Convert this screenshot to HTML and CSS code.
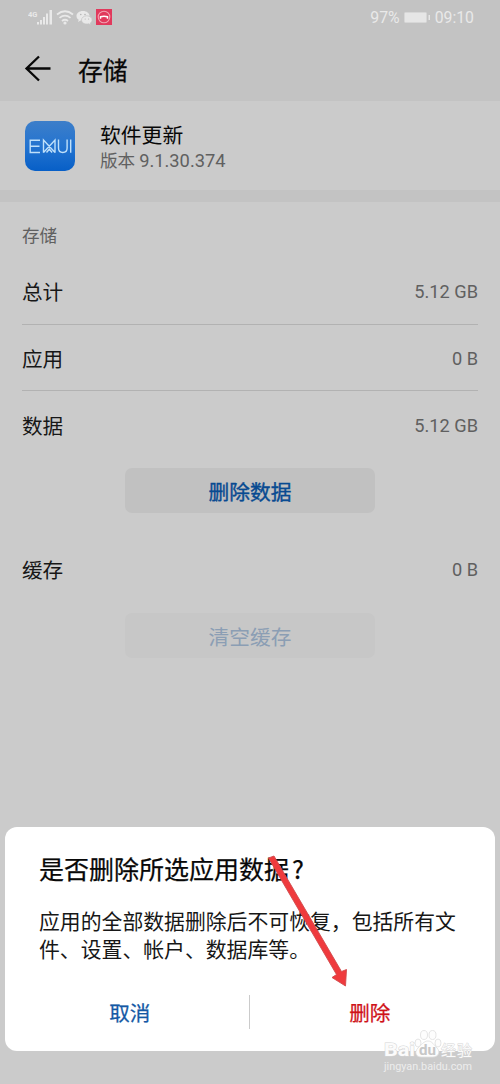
FILE: index.html
```
<!DOCTYPE html>
<html lang="zh-CN">
<head>
<meta charset="utf-8">
<title>存储</title>
<link rel="stylesheet" href="styles.css">
</head>
<body>
<div class="phone">
  <header class="top">
    <div class="status">
      <svg class="status-icons" width="90" height="20" viewBox="0 0 90 20">
        <text class="net" x="0" y="8">4G</text>
        <g fill="#e9e9e9">
          <path d="M9 13h2v2.500H9zM12 11h2v4.500h-2zM15 8h2v7.500h-2zM18 4.500h2v11h-2zM21.500 1H24v14.500h-2.500z"/>
          <circle cx="37" cy="14" r="1.600"/>
        </g>
        <g fill="none" stroke="#e9e9e9" stroke-width="1.700">
          <path d="M29 5.500Q37-1 45 5.500M31.500 8.800Q37 4.500 42.500 8.800M34 12Q37 9.500 40 12"/>
        </g>
        <g fill="#e9e9e9">
          <path d="M55 2c-4 0-6.500 2.200-6.500 5 0 1.600.8 2.900 2.200 3.800L50 13l2.600-1.400c.9.200 1.400.3 2.400.3 3.700 0 6.500-2.200 6.500-4.900S58.700 2 55 2z"/>
          <path d="M58.800 6.800c3.200 0 5.300 1.900 5.300 4.200 0 1.300-.7 2.400-1.800 3.100l.5 1.800-2.100-1.100c-4 .9-7.200-1-7.200-3.800 0-2.300 2.300-4.200 5.300-4.200z" stroke="#c3c3c3" stroke-width=".7"/>
        </g>
        <g fill="#b5b5b5"><circle cx="52.800" cy="5.500" r=".8"/><circle cx="57" cy="5.500" r=".8"/><circle cx="57.200" cy="10" r=".6"/><circle cx="60.600" cy="10" r=".6"/></g>
        <rect x="68" y="0" width="16" height="16" fill="#e1395c"/>
        <circle cx="76" cy="8" r="5.800" fill="none" stroke="#f1a1b0" stroke-width="1.100"/>
        <path d="M72.500 9.700V7.800q3.500-1.200 7 0v1.900" fill="none" stroke="#fff" stroke-width="1.500"/>
      </svg>
      <div class="status-right">
        <span>97%</span>
        <svg width="27" height="11" viewBox="0 0 27 11"><rect x=".5" y=".5" width="22" height="10" rx="1" fill="#e6e6e6" stroke="#d7d7d7"/><path d="M24.500 3h1.500v5h-1.500z" fill="#e6e6e6"/></svg>
        <span>09:10</span>
      </div>
    </div>
    <div class="titlebar">
      <svg width="28" height="28" viewBox="0 0 28 28" fill="none" stroke="#080808" stroke-width="2.300"><path d="M15 1.500 2.500 13.500l12.500 12M2.500 13.500H26.500"/></svg>
      <h1>存储</h1>
    </div>
  </header>
  <section class="app">
    <svg class="app-icon" width="52" height="52" viewBox="0 0 52 52">
      <defs><linearGradient id="blue" x2="0" y2="1"><stop offset="0" stop-color="#3d7ec9"/><stop offset=".5" stop-color="#2474d0"/><stop offset="1" stop-color="#075fc7"/></linearGradient></defs>
      <rect x="1" y="1" width="50" height="50" rx="10" fill="url(#blue)"/>
      <path d="M16 20.200H6.200v12.300H16M6.200 26.200H15.500M19.500 32.800V20L31 32.500M19.500 32.500 31 20V32.800M22.500 32.500l2.800-3.300 2.800 3.300M34.500 19.500v8.500q0 4.500 4.300 4.500t4.300-4.500v-8.500M46.700 19.500v13.300" fill="none" stroke="#bfe0fa" stroke-width="1.400"/>
    </svg>
    <div class="app-text">
      <h2>软件更新</h2>
      <p>版本 <span class="latin">9.1.30.374</span></p>
    </div>
  </section>
  <main class="storage">
    <p class="section">存储</p>
    <div class="row ruled"><span>总计</span><span class="value">5.12 GB</span></div>
    <div class="row ruled"><span>应用</span><span class="value">0 B</span></div>
    <div class="row"><span>数据</span><span class="value">5.12 GB</span></div>
    <button class="btn">删除数据</button>
    <div class="row cache"><span>缓存</span><span class="value">0 B</span></div>
    <button class="btn disabled">清空缓存</button>
  </main>
  <div class="dialog">
    <h3>是否删除所选应用数据<span class="mark">?</span></h3>
    <p class="message">应用的全部数据删除后不可恢复，包括所有文件、设置、帐户、数据库等。</p>
    <div class="actions"><span class="cancel">取消</span><span class="delete">删除</span></div>
  </div>
  <svg class="arrow" width="90" height="142" viewBox="0 0 90 142"><path d="M5.500 9 11 7 78.500 122.500 83.500 120.500 82.500 137 69 128.500 73.500 125.500z" fill="#ef3a3d" stroke="#d04a4c" stroke-width=".9"/></svg>
  <svg class="watermark" width="125" height="64" viewBox="0 0 125 64">
    <g fill="#fdfdfd" stroke="#dedede" stroke-width=".8">
      <ellipse cx="43" cy="23" rx="3" ry="4"/><ellipse cx="49" cy="15" rx="3.500" ry="4.500"/><ellipse cx="57.500" cy="15" rx="3.500" ry="4.500"/><ellipse cx="63" cy="23" rx="3" ry="4"/>
      <path d="M53 21c4 0 6 4 9 7 4 4 1 9-4 9H46c-5 0-7-5-3-9 3-3 6-7 10-7z"/>
    </g>
    <text class="wm-brand" x="9" y="36" textLength="31" lengthAdjust="spacingAndGlyphs">Bai</text>
    <text class="wm-du" x="44" y="35" textLength="17" lengthAdjust="spacingAndGlyphs">du</text>
    <text class="wm-cn" x="66" y="36" textLength="31">经验</text>
    <text class="wm-url" x="9" y="50" textLength="88" lengthAdjust="spacingAndGlyphs">jingyan.baidu.com</text>
  </svg>
</div>
</body>
</html>
```
FILE: styles.css
```
* { box-sizing: border-box; }
body { margin: 0; }
h1, h2, h3, p { margin: 0; font-weight: 400; }
.phone {
  position: relative;
  display: flex;
  flex-direction: column;
  width: 500px;
  height: 1084px;
  overflow: hidden;
  background: #cbcbcb;
  color: #171717;
  font-family: "Noto Sans CJK SC", sans-serif;
  font-size: 20.6px;
}
.top { height: 101px; background: #c3c3c3; }
.status { display: flex; justify-content: space-between; height: 36px; padding: 9px 26px 0 28px; }
.status-right { display: flex; align-items: center; gap: 4px; height: 17px; color: #e9e9e9; font: 15.8px Roboto, sans-serif; }
.net { fill: #e9e9e9; font: bold 7.500px Roboto, sans-serif; }
.titlebar { display: flex; align-items: center; gap: 26px; height: 65px; padding-left: 24px; }
.titlebar h1 { color: #080808; font-size: 24.8px; line-height: 36px; -webkit-text-stroke: .3px; }
.app { display: flex; gap: 24px; height: 101px; padding: 19px 24px; border-bottom: 12px solid #c3c3c3; }
.app-icon { flex: none; }
.app h2 { color: #080808; font-size: 20.8px; line-height: 28px; }
.app p { color: #606060; font-size: 17.6px; line-height: 24px; }
.latin { font-family: Roboto, sans-serif; font-size: 18.3px; }
.storage { display: flex; flex-direction: column; padding: 0 22px; }
.section { height: 56px; padding-top: 20px; color: #606060; font-size: 17.6px; line-height: 25px; }
.row { display: flex; align-items: center; justify-content: space-between; height: 66.500px; padding-top: 1px; }
.ruled { border-bottom: 1px solid #b2b2b2; }
.value { padding-top: 1px; color: #606060; font: 18.2px Roboto, sans-serif; }
.btn { align-self: center; width: 250px; height: 45px; margin-top: 10px; padding: 0; border: 0; border-radius: 7px; background: #c1c1c1; color: #084a91; font: 400 20.7px/46px "Noto Sans CJK SC", sans-serif; -webkit-text-stroke: .4px; }
.cache { margin-top: 23px; }
.disabled { margin-top: 10.500px; background: #c7c7c7; color: #8b9eb4; -webkit-text-stroke: 0; }
.dialog { position: absolute; top: 827px; left: 5px; width: 490px; height: 224px; padding: 23px 32px 0 34px; border-radius: 12px; background: #fff; }
.dialog h3 { color: #080808; font-size: 25px; line-height: 36px; -webkit-text-stroke: .25px; }
.mark { margin-left: 3px; }
.message { width: 424px; margin-top: 21px; font-size: 20.85px; line-height: 27.500px; }
.actions { display: grid; grid-template-columns: 1fr 1fr; align-items: center; height: 34px; margin: 33px -27px 0 -30px; text-align: center; }
.actions span { line-height: 34px; -webkit-text-stroke: .25px; }
.cancel { padding-left: 2px; border-right: 1px solid #cbcbcb; color: #1459a5; }
.delete { color: #cf1218; }
.arrow { position: absolute; top: 849px; left: 263px; }
.watermark { position: absolute; top: 1020px; left: 375px; }
.wm-brand, .wm-cn { fill: #fbfbfb; stroke: #d5d5d5; stroke-width: .9px; paint-order: stroke; }
.wm-brand { font: bold 18px Roboto, sans-serif; }
.wm-du { fill: #c7c7c7; font: bold 14px Roboto, sans-serif; }
.wm-cn { font: 15px "Noto Sans CJK SC", sans-serif; }
.wm-url { fill: #ededed; font: 11px Roboto, sans-serif; }
```
